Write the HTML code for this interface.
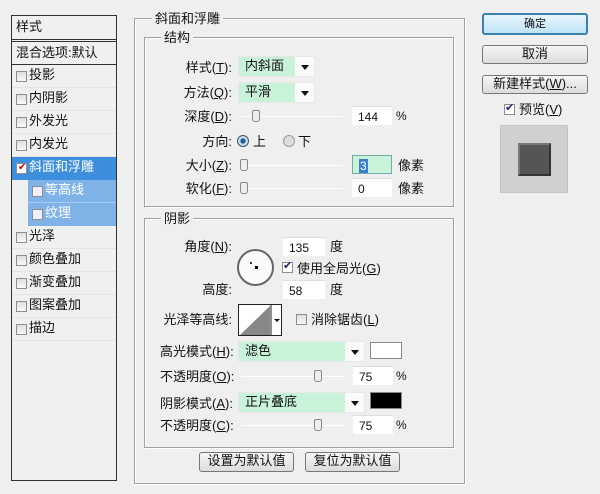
<!DOCTYPE html>
<html><head><meta charset="utf-8"><style>
*{margin:0;padding:0;box-sizing:border-box}
body{width:600px;height:494px;background:#efefef;position:relative;overflow:hidden;font-family:"Liberation Sans","Noto Sans CJK SC",sans-serif;font-size:13px;color:#111}
.a{position:absolute;white-space:nowrap;line-height:1}
.box{position:absolute;border:1px solid #a0a0a0;box-shadow:1px 1px 0 #fff inset,1px 1px 0 #fff}
.cb{position:absolute;width:11px;height:11px;border:1px solid #8e8e8e;background:linear-gradient(#e0e0e0,#f8f8f8)}
.li{position:absolute;left:12px;width:104px;height:23px;border-bottom:1px solid #e4e4e4}
.li span{position:absolute;left:17px;top:2px;font-size:13px;line-height:1.2}
.li .cb{left:4px;top:6px}
.dd{position:absolute;height:21px;background:#c9f3d8;border:1px solid #e8e8e8}
.dd span{position:absolute;left:6px;top:1px;line-height:1.3}
.dd i{position:absolute;right:0;top:0;width:19px;height:19px;background:#fafafa}
.dd i:after{content:"";position:absolute;left:6px;top:8px;border:4px solid transparent;border-top:5px solid #111;border-bottom:0}
.in{position:absolute;height:19px;background:#fff;border-top:1px solid #ddd;font-size:12px;padding:3px 0 0 6px}
.sl{position:absolute;height:1px;background:#999;border-bottom:1px solid #fff}
.th{position:absolute;width:8px;height:12px;border:1px solid #888;border-radius:2px 2px 3px 3px;background:#eee}
.btn{position:absolute;border:1px solid #777;border-radius:3px;background:linear-gradient(#f6f6f6,#dcdcdc);text-align:center;font-size:13px;line-height:16px}
.r{text-align:right}
</style></head><body>
<div style="position:absolute;left:11px;top:15px;width:106px;height:466px;border:1px solid #333;background:#f0f0f0"></div>
<div class="a" style="left:16px;top:20px">样式</div>
<div style="position:absolute;left:12px;top:39px;width:104px;height:3px;border-top:1px solid #333;border-bottom:1px solid #333"></div>
<div class="a" style="left:16px;top:46px">混合选项:默认</div>
<div style="position:absolute;left:12px;top:64px;width:104px;height:1px;background:#333"></div>
<div class="li" style="top:65px"><div class="cb"></div><span>投影</span></div>
<div class="li" style="top:88px"><div class="cb"></div><span>内阴影</span></div>
<div class="li" style="top:111px"><div class="cb"></div><span>外发光</span></div>
<div class="li" style="top:134px"><div class="cb"></div><span>内发光</span></div>
<div class="li" style="top:157px;background:#3d8fdd;border:0"><div class="cb" style="background:#fff"></div><span style="color:#fff">斜面和浮雕</span><div class="a" style="left:6px;top:6px;color:#c00;font-size:10px">✔</div></div>
<div class="li" style="top:180px;left:28px;width:88px;background:#7fb3e8;border-bottom:1px solid #a8cdf0"><div class="cb" style="background:#eef"></div><span style="color:#fff">等高线</span></div>
<div class="li" style="top:203px;left:28px;width:88px;background:#7fb3e8;border:0"><div class="cb" style="background:#eef"></div><span style="color:#fff">纹理</span></div>
<div class="li" style="top:226px"><div class="cb"></div><span>光泽</span></div>
<div class="li" style="top:249px"><div class="cb"></div><span>颜色叠加</span></div>
<div class="li" style="top:272px"><div class="cb"></div><span>渐变叠加</span></div>
<div class="li" style="top:295px"><div class="cb"></div><span>图案叠加</span></div>
<div class="li" style="top:318px"><div class="cb"></div><span>描边</span></div>

<div class="box" style="left:134px;top:18px;width:331px;height:466px"></div>
<div class="a" style="left:152px;top:12px;background:#efefef;padding:0 3px">斜面和浮雕</div>
<div class="box" style="left:144px;top:37px;width:310px;height:170px"></div>
<div class="a" style="left:161px;top:31px;background:#efefef;padding:0 3px">结构</div>
<div class="a r" style="left:170px;width:62px;top:61px">样式(<u>T</u>):</div>
<div class="dd" style="left:238px;top:56px;width:77px"><span>内斜面</span><i></i></div>
<div class="a r" style="left:170px;width:62px;top:86px">方法(<u>Q</u>):</div>
<div class="dd" style="left:238px;top:82px;width:77px"><span>平滑</span><i></i></div>
<div class="a r" style="left:170px;width:62px;top:110px">深度(<u>D</u>):</div>
<div class="sl" style="left:241px;top:116px;width:102px"></div><div class="th" style="left:252px;top:110px"></div>
<div class="in" style="left:352px;top:106px;width:40px">144</div><div class="a" style="left:396px;top:110px;font-size:12px">%</div>
<div class="a r" style="left:170px;width:62px;top:135px">方向:</div>
<div style="position:absolute;left:237px;top:135px;width:12px;height:12px;border-radius:50%;border:1px solid #456;background:radial-gradient(#1f5d9a 35%,#cde 40%)"></div>
<div class="a" style="left:253px;top:135px">上</div>
<div style="position:absolute;left:283px;top:135px;width:12px;height:12px;border-radius:50%;border:1px solid #999;background:#ddd"></div>
<div class="a" style="left:298px;top:135px">下</div>
<div class="a r" style="left:170px;width:62px;top:159px">大小(<u>Z</u>):</div>
<div class="sl" style="left:241px;top:165px;width:102px"></div><div class="th" style="left:240px;top:159px"></div>
<div class="in" style="left:352px;top:155px;width:40px;background:#c9f3d8;border:1px solid #7aa"><span style="background:#3b7fd0;color:#fff;padding:0 1px">3</span></div><div class="a" style="left:398px;top:159px">像素</div>
<div class="a r" style="left:170px;width:62px;top:182px">软化(<u>F</u>):</div>
<div class="sl" style="left:241px;top:188px;width:102px"></div><div class="th" style="left:240px;top:182px"></div>
<div class="in" style="left:352px;top:178px;width:40px">0</div><div class="a" style="left:398px;top:182px">像素</div>

<div class="box" style="left:144px;top:218px;width:310px;height:230px"></div>
<div class="a" style="left:161px;top:212px;background:#efefef;padding:0 3px">阴影</div>
<div class="a r" style="left:170px;width:62px;top:240px">角度(<u>N</u>):</div>
<div class="in" style="left:283px;top:237px;width:42px">135</div><div class="a" style="left:330px;top:240px">度</div>
<div style="position:absolute;left:237px;top:249px;width:37px;height:37px;border-radius:50%;border:2px solid #666;background:#fafafa"></div>
<div style="position:absolute;left:250px;top:262px;width:2px;height:2px;background:#333"></div>
<div style="position:absolute;left:255px;top:266px;width:3px;height:3px;background:#000"></div>
<div class="cb" style="left:282px;top:262px;background:#fff"></div><div class="a" style="left:283px;top:261px;color:#226;font-size:11px">✔</div>
<div class="a" style="left:297px;top:262px">使用全局光(<u>G</u>)</div>
<div class="a r" style="left:170px;width:62px;top:283px">高度:</div>
<div class="in" style="left:283px;top:280px;width:42px">58</div><div class="a" style="left:330px;top:283px">度</div>
<div class="a r" style="left:150px;width:82px;top:313px">光泽等高线:</div>
<div style="position:absolute;left:238px;top:304px;width:44px;height:32px;border:1px solid #222;background:#fff;overflow:hidden">
<svg width="44" height="32" style="position:absolute;left:0;top:0"><polygon points="1,30 31,1 31,30" fill="#888"/><line x1="32" y1="0" x2="32" y2="32" stroke="#222"/><polygon points="35,14 41,14 38,17" fill="#111"/></svg></div>
<div class="cb" style="left:296px;top:314px"></div><div class="a" style="left:311px;top:313px">消除锯齿(<u>L</u>)</div>
<div class="a" style="left:160px;top:345px">高光模式(<u>H</u>):</div>
<div class="dd" style="left:238px;top:341px;width:127px"><span>滤色</span><i></i></div>
<div style="position:absolute;left:370px;top:342px;width:32px;height:17px;border:1px solid #888;background:#fff"></div>
<div class="a" style="left:160px;top:370px">不透明度(<u>O</u>):</div>
<div class="sl" style="left:241px;top:376px;width:104px"></div><div class="th" style="left:314px;top:370px"></div>
<div class="in" style="left:353px;top:366px;width:40px">75</div><div class="a" style="left:396px;top:370px;font-size:12px">%</div>
<div class="a" style="left:160px;top:397px">阴影模式(<u>A</u>):</div>
<div class="dd" style="left:238px;top:392px;width:127px"><span>正片叠底</span><i></i></div>
<div style="position:absolute;left:370px;top:392px;width:32px;height:17px;border:1px solid #888;background:#000"></div>
<div class="a" style="left:160px;top:419px">不透明度(<u>C</u>):</div>
<div class="sl" style="left:241px;top:425px;width:104px"></div><div class="th" style="left:314px;top:419px"></div>
<div class="in" style="left:353px;top:415px;width:40px">75</div><div class="a" style="left:396px;top:419px;font-size:12px">%</div>

<div class="btn" style="left:199px;top:452px;width:95px;height:20px">设置为默认值</div>
<div class="btn" style="left:305px;top:452px;width:95px;height:20px">复位为默认值</div>

<div class="btn" style="left:482px;top:13px;width:106px;height:22px;border-color:#3c7fb1;background:linear-gradient(#e8f6fd,#bfe3f6);border-width:2px;font-size:11px;line-height:18px">确定</div>
<div class="btn" style="left:482px;top:45px;width:106px;height:19px">取消</div>
<div class="btn" style="left:482px;top:75px;width:106px;height:19px">新建样式(<u>W</u>)...</div>
<div class="cb" style="left:504px;top:104px;background:#fff"></div><div class="a" style="left:505px;top:103px;color:#226;font-size:11px">✔</div>
<div class="a" style="left:519px;top:103px">预览(<u>V</u>)</div>
<div style="position:absolute;left:500px;top:125px;width:68px;height:68px;background:#d0d0d0;border:1px solid #c4c4c4"></div>
<div style="position:absolute;left:518px;top:143px;width:33px;height:33px;background:#555;border-top:2px solid #777;border-left:2px solid #777;border-right:2px solid #333;border-bottom:2px solid #333"></div>
</body></html>
